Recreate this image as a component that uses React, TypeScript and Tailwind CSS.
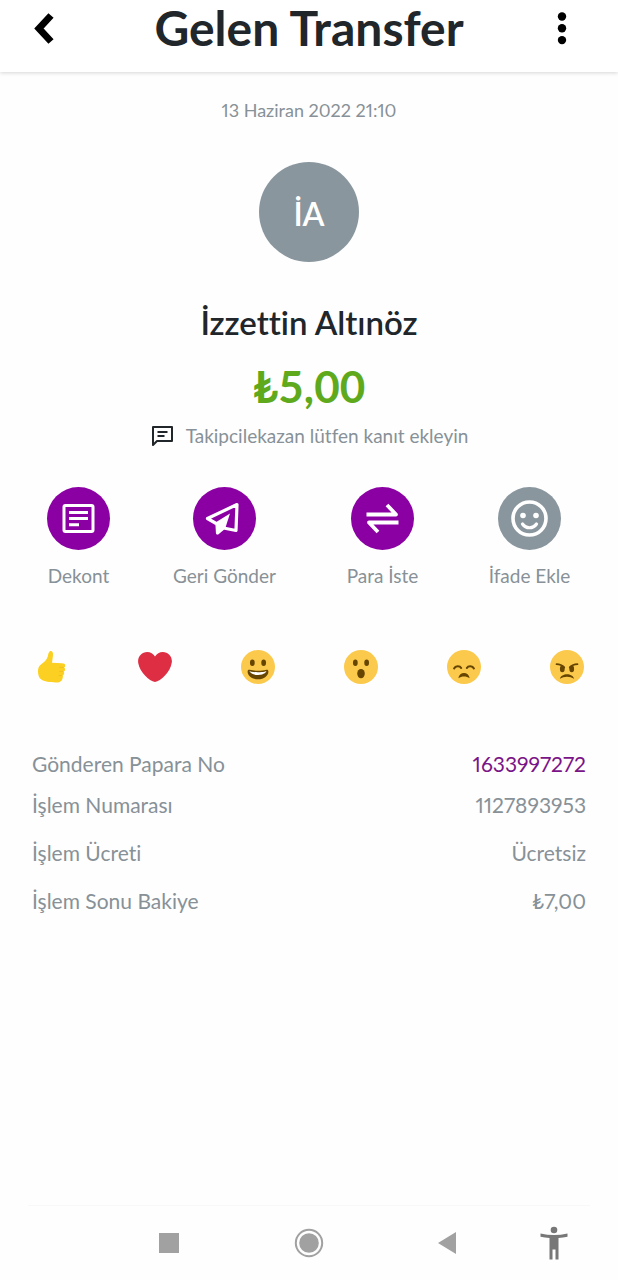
import type { ReactNode } from "react";

const actions = [
  { label: "Dekont", color: "bg-[#8b00a3]", icon: <ReceiptIcon /> },
  { label: "Geri Gönder", color: "bg-[#8b00a3]", icon: <SendIcon /> },
  { label: "Para İste", color: "bg-[#8b00a3]", icon: <SwapIcon /> },
  { label: "İfade Ekle", color: "bg-[#8a969e]", icon: <SmileIcon /> },
];

function ReceiptIcon() {
  return (
    <svg viewBox="0 0 63 63" className="size-full" fill="none" stroke="#fff">
      <rect x="17" y="18.5" width="29" height="26" rx="1.5" strokeWidth="3" />
      <path d="M22 25.5h19M22 31.5h19M22 37.8h10" strokeWidth="3" />
    </svg>
  );
}

function SendIcon() {
  return (
    <svg viewBox="0 0 63 63" className="size-full" fill="none" stroke="#fff">
      <path
        d="M44 17.5 14.5 31.5 24 37 24.5 46 30.5 41 43 43.5Z"
        strokeWidth="3.2"
        strokeLinejoin="round"
      />
      <path d="M37 26.5 22.5 35.5 24 47.5 32.5 40.5Z" fill="#fff" stroke="none" />
    </svg>
  );
}

function SwapIcon() {
  return (
    <svg viewBox="0 0 63 63" className="size-full" fill="none" stroke="#fff" strokeWidth="3.8">
      <path d="M15.5 27.5H45L36 18M47.5 35.5H18L27 45" strokeLinejoin="round" />
    </svg>
  );
}

function SmileIcon() {
  return (
    <svg viewBox="0 0 63 63" className="size-full" fill="none" stroke="#fff">
      <circle cx="31.5" cy="31.5" r="16.5" strokeWidth="3.6" />
      <circle cx="25" cy="28.5" r="2.8" fill="#fff" stroke="none" />
      <circle cx="38" cy="28.5" r="2.8" fill="#fff" stroke="none" />
      <path d="M24.5 37c3.5 5 10.5 5 14 0" strokeWidth="3.2" strokeLinecap="round" />
    </svg>
  );
}

function Face({ children }: { children: ReactNode }) {
  return (
    <svg viewBox="0 0 36 36" className="size-[34px]">
      <circle cx="18" cy="18" r="18" fill="#fbc94b" />
      {children}
    </svg>
  );
}

const reactions = [
  {
    name: "Beğen",
    icon: (
      <svg viewBox="0 0 36 36" className="size-[34px]">
        <path
          d="M15.5 1.5c1.5-1.2 3.3-.2 3.5 2 .3 2.8-.6 6.5-1 10l10.5.6c2.4.1 3.5.8 3.5 2.3 0 1-.5 1.7-1.2 2.1.8.5 1.2 1.3 1 2.4-.1 1-.7 1.7-1.5 2 .6.6.8 1.3.6 2.2-.2.9-.9 1.5-1.7 1.7.4.5.5 1.2.3 2-.8 4.5-3 5.7-7.5 5.5-5.5-.1-12.5-.8-16-3.6C2.5 27.5 2 18 6 15.5c3-1.8 6.5-4.5 7.5-8.5.4-2 .7-4.5 2-5.5Z"
          fill="#fbd023"
        />
        <path
          d="M26 18.3l4 .2M26 22.6l3.5.3M25.5 27l3 .2"
          fill="none"
          stroke="#f3be1e"
          strokeWidth="1"
          strokeLinecap="round"
        />
      </svg>
    ),
  },
  {
    name: "Kalp",
    icon: (
      <svg viewBox="0 0 36 36" className="size-[34px]">
        <path
          d="M35.9 11.8c0-5.3-4.3-9.6-9.6-9.6-3.5 0-6.6 1.9-8.3 4.7-1.7-2.8-4.8-4.7-8.3-4.7C4.4 2.2.1 6.5.1 11.8c0 .8.1 1.5.2 2.2C1.8 23.1 11.9 32.8 18 34c6.1-1.2 16.2-10.9 17.6-20 .2-.7.3-1.4.3-2.2Z"
          fill="#dd2e44"
        />
      </svg>
    ),
  },
  {
    name: "Mutlu",
    icon: (
      <Face>
        <ellipse cx="12" cy="13.5" rx="2.5" ry="3.5" fill="#664500" />
        <ellipse cx="24" cy="13.5" rx="2.5" ry="3.5" fill="#664500" />
        <path
          d="M18 22c-3.6 0-6-.4-9-1-.7-.1-2 0-2 2 0 4 4.6 8 11 8s11-4 11-8c0-2-1.3-2.1-2-2-3 .6-5.4 1-9 1Z"
          fill="#664500"
        />
        <path d="M9 22.5s3 1 9 1 9-1 9-1-2 4-9 4-9-4-9-4Z" fill="#fff" />
      </Face>
    ),
  },
  {
    name: "Şaşkın",
    icon: (
      <Face>
        <ellipse cx="12" cy="13.5" rx="2.5" ry="3.5" fill="#664500" />
        <ellipse cx="24" cy="13.5" rx="2.5" ry="3.5" fill="#664500" />
        <ellipse cx="18" cy="25" rx="4" ry="5" fill="#664500" />
      </Face>
    ),
  },
  {
    name: "Üzgün",
    icon: (
      <Face>
        <path
          d="M7.5 19.5c1.5-3 6-3 7.5-.5M21 19c1.5-2.5 6-2.5 7.5.5"
          fill="none"
          stroke="#664500"
          strokeWidth="2.2"
          strokeLinecap="round"
        />
        <path d="M12 30c1-7.5 11-7.5 12 0-3.5-2.5-8.5-2.5-12 0Z" fill="#664500" />
      </Face>
    ),
  },
  {
    name: "Kızgın",
    icon: (
      <Face>
        <ellipse cx="13" cy="20" rx="2.5" ry="3.5" fill="#664500" />
        <ellipse cx="23" cy="20" rx="2.5" ry="3.5" fill="#664500" />
        <path
          d="M7 15c3 0 5.5.7 8 3.5M29 15c-3 0-5.5.7-8 3.5"
          fill="none"
          stroke="#664500"
          strokeWidth="2"
          strokeLinecap="round"
        />
        <path d="M10.5 30.5c1.5-6.5 13.5-6.5 15 0-4-3-11-3-15 0Z" fill="#664500" />
      </Face>
    ),
  },
];

export default function App() {
  return (
    <div className="flex min-h-screen flex-col bg-[#fefefe] font-['Lato','Noto_Sans',sans-serif] text-[#879197] [font-variant-ligatures:none]">

      {/* Header */}
      <header className="flex h-[72px] items-center bg-white pr-11 pb-4 pl-5 shadow-[0_1px_4px_rgba(0,0,0,0.16)]">
        <button aria-label="Geri" className="flex size-12 items-center justify-center">
          <svg viewBox="0 0 24 36" className="h-9 w-6" fill="none" stroke="#000" strokeWidth="7">
            <path d="M19 5.5 7 18.500l12 13" />
          </svg>
        </button>

        <h1 className="flex-1 text-center text-5xl font-bold text-[#20262a]">Gelen Transfer</h1>

        <button aria-label="Menü" className="flex h-12 w-6 items-center justify-center">
          <svg viewBox="0 0 12 36" className="h-9 w-3">
            <circle cx="6" cy="6.5" r="4.2" />
            <circle cx="6" cy="18.3" r="4.2" />
            <circle cx="6" cy="30.1" r="4.2" />
          </svg>
        </button>
      </header>

      <main className="flex flex-col">

        {/* Sender and amount */}
        <section className="flex flex-col items-center">
          <time dateTime="2022-06-13T21:10" className="mt-6 text-lg leading-7 proportional-nums">
            13 Haziran 2022 21:10
          </time>

          <div className="mt-[38px] flex size-[100px] items-center justify-center rounded-full bg-[#8a969e] pt-1 text-[32px] font-semibold text-white">
            İA
          </div>

          <h2 className="mt-10 text-[33px] leading-10 font-semibold text-[#20262a]">
            İzzettin Altınöz
          </h2>

          <p className="mt-4 text-[44px] leading-[56px] font-bold text-[#5fa91d]">₺5,00</p>

          <p className="mt-2 flex items-center gap-3 text-[19px] leading-7">
            <svg viewBox="0 0 24 24" className="size-6" fill="none" stroke="#20262a" strokeWidth="2">
              <path d="M3 21V3h19v14H7Z" strokeLinejoin="round" />
              <path d="M7.5 8h10M7.5 12h7" />
            </svg>
            Takipcilekazan lütfen kanıt ekleyin
          </p>
        </section>

        {/* Actions */}
        <section className="mt-[37px] grid grid-cols-[125fr_167fr_149fr_145fr] px-4">
          {actions.map((action) => (
            <button key={action.label} className="flex flex-col items-center gap-[14px]">
              <span className={`size-[63px] rounded-full ${action.color}`}>{action.icon}</span>
              <span className="text-[19px] leading-6">{action.label}</span>
            </button>
          ))}
        </section>

        {/* Reactions */}
        <section className="mt-[62px] grid grid-cols-6">
          {reactions.map((reaction) => (
            <button key={reaction.name} aria-label={reaction.name} className="flex justify-center">
              {reaction.icon}
            </button>
          ))}
        </section>

        {/* Details */}
        <dl className="mt-[66px] px-8 text-[21px] leading-7 proportional-nums">
          <div className="flex justify-between">
            <dt>Gönderen Papara No</dt>
            <dd>
              <a href="#" className="text-[#7b1487]">1633997272</a>
            </dd>
          </div>
          <div className="mt-[13px] flex justify-between">
            <dt>İşlem Numarası</dt>
            <dd>1127893953</dd>
          </div>
          <div className="mt-5 flex justify-between">
            <dt>İşlem Ücreti</dt>
            <dd>Ücretsiz</dd>
          </div>
          <div className="mt-5 flex justify-between">
            <dt>İşlem Sonu Bakiye</dt>
            <dd>₺7,00</dd>
          </div>
        </dl>

      </main>

      {/* System navigation */}
      <footer className="mt-auto">
        <div className="mx-7 border-t border-[#f8f8f8]" />
        <nav className="grid h-[74px] grid-cols-[99fr_140fr_140fr_136fr_78fr_25fr] items-center justify-items-center">
          <button aria-label="Son uygulamalar" className="col-start-2 size-5 bg-[#a1a1a1]" />
          <button aria-label="Ana ekran">
            <svg viewBox="0 0 30 30" className="size-[30px]">
              <circle cx="15" cy="15" r="13.2" fill="none" stroke="#a1a1a1" strokeWidth="2" />
              <circle cx="15" cy="15" r="9.8" fill="#a1a1a1" />
            </svg>
          </button>
          <button aria-label="Geri git">
            <svg viewBox="0 0 20 24" className="h-6 w-5">
              <path d="M19 1v22L1 12Z" fill="#a1a1a1" />
            </svg>
          </button>
          <button aria-label="Erişilebilirlik">
            <svg viewBox="0 0 28 34" className="h-[34px] w-7" fill="#777">
              <circle cx="14" cy="4" r="3.3" />
              <path d="M.5 7.5c9 2 18 2 27 0v3.2c-3 .7-6 1.1-9 1.3V33.5h-3V23.5h-3v10h-3V12c-3-.2-6-.6-9-1.3Z" />
            </svg>
          </button>
        </nav>
      </footer>

    </div>
  );
}
